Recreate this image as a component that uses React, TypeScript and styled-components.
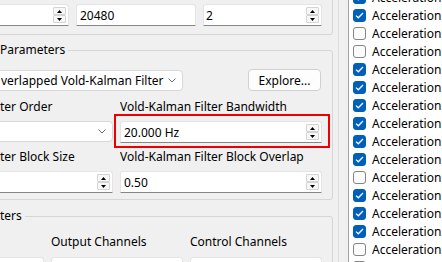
import React from "react";
import styled, { createGlobalStyle } from "styled-components";

const GlobalStyle = createGlobalStyle`
  html, body {
    margin: 0;
    padding: 0;
    background: #f0f0f0;
  }
  body {
    font-family: "Noto Sans", "Segoe UI", sans-serif;
    font-size: 12px;
    color: #000;
  }
`;

const Window = styled.div`
  display: flex;
  width: 442px;
  height: 262px;
  overflow: hidden;
  background: #f0f0f0;
`;

const SettingsPane = styled.div`
  width: 338px;
  flex-shrink: 0;
  overflow: hidden;
  border-right: 1px solid #dedede;
`;

// the pane is scrolled a little to the right, so the left edge is cut
const Scrolled = styled.div`
  width: 363px;
  margin-left: -30px;
`;

const Group = styled.div<{ $top: number; $bottom?: number }>`
  border: 1px solid #d6d6d6;
  border-radius: 3px;
  margin-top: ${(p) => p.$top}px;
  padding: 0 10px ${(p) => p.$bottom ?? 6}px 0;
`;

const TopGroup = styled(Group)`
  padding-top: 13px;
  padding-bottom: 8px;
`;

const GroupTitle = styled.div`
  width: fit-content;
  margin: -9px 0 0 29px;
  padding-right: 3px;
  height: 16px;
  line-height: 16px;
  background: #f0f0f0;
  white-space: nowrap;
`;

const Grid = styled.div<{ $cols: string; $rows?: string; $mt?: number }>`
  display: grid;
  grid-template-columns: ${(p) => p.$cols};
  grid-template-rows: ${(p) => p.$rows ?? "auto"};
  column-gap: 7px;
  row-gap: 6px;
  margin-top: ${(p) => p.$mt ?? 0}px;
`;

const Label = styled.div<{ $indent?: number }>`
  height: 16px;
  line-height: 16px;
  padding-left: ${(p) => p.$indent ?? 0}px;
  white-space: nowrap;
  overflow: hidden;
`;

const Field = styled.div<{ $indent?: number; $h?: number }>`
  box-sizing: border-box;
  display: flex;
  align-items: center;
  height: ${(p) => p.$h ?? 22}px;
  background: #fff;
  border: 1px solid #e4e4e4;
  border-bottom-color: #868686;
  border-radius: 3px 3px 0 0;
  padding: 0 2px 0 ${(p) => p.$indent ?? 3}px;
`;

const Value = styled.span`
  flex: 1;
  white-space: nowrap;
  overflow: hidden;
`;

const SpinStack = styled.div`
  display: flex;
  flex-direction: column;
`;

const SpinButton = styled.div`
  box-sizing: border-box;
  display: flex;
  align-items: center;
  justify-content: center;
  width: 13px;
  height: 8px;
  background: #f7f7f7;
  border: 1px solid #d4d4d4;
  border-radius: 1px;
`;

const Combo = styled.div<{ $indent?: number; $w?: number }>`
  box-sizing: border-box;
  display: flex;
  align-items: center;
  width: ${(p) => (p.$w ? `${p.$w}px` : "auto")};
  height: 21px;
  background: #fff;
  border: 1px solid #d8d8d8;
  border-radius: 4px;
  padding: 0 6px 0 ${(p) => p.$indent ?? 4}px;
`;

const ButtonRow = styled.div`
  display: flex;
  align-items: center;
  justify-content: space-between;
  height: 22px;
  margin-top: 11px;
`;

const PushButton = styled.div`
  box-sizing: border-box;
  display: flex;
  align-items: center;
  justify-content: center;
  width: 73px;
  height: 22px;
  margin-right: 1px;
  background: #fdfdfd;
  border: 1px solid #d0d0d0;
  border-radius: 4px;
`;

const Highlighted = styled.div`
  position: relative;
  &::after {
    content: "";
    position: absolute;
    top: -7px;
    left: -6px;
    right: -8px;
    bottom: -5px;
    border: 2px solid #ec0000;
    pointer-events: none;
  }
`;

const ListBox = styled.div`
  flex: 1;
  margin-left: 9px;
  background: #fff;
  border-left: 1px solid #a3a3a3;
  overflow: hidden;
`;

const ListInner = styled.div`
  margin-top: -12px;
`;

const ListRow = styled.div`
  display: flex;
  align-items: center;
  gap: 6px;
  height: 18px;
  padding-left: 4px;
  white-space: nowrap;
`;

const CheckBox = styled.span<{ $checked: boolean }>`
  box-sizing: border-box;
  display: flex;
  align-items: center;
  justify-content: center;
  width: 13px;
  height: 13px;
  flex-shrink: 0;
  border-radius: 3px;
  background: ${(p) => (p.$checked ? "#005fb8" : "#fbfbfb")};
  border: 1px solid ${(p) => (p.$checked ? "#005fb8" : "#858585")};
`;

const Arrow = ({ up }: { up?: boolean }) => (
  <svg width="5" height="3" viewBox="0 0 5 3">
    <polygon points={up ? "0,3 5,3 2.5,0" : "0,0 5,0 2.5,3"} fill="#000" />
  </svg>
);

const Chevron = () => (
  <svg width="8" height="5" viewBox="0 0 8 5">
    <polyline points="0.5,0.5 4,4 7.5,0.5" fill="none" stroke="#6a6a6a" strokeWidth="1" />
  </svg>
);

const Check = () => (
  <svg width="9" height="7" viewBox="0 0 9 7">
    <polyline points="1,3.6 3.3,5.8 8,1" fill="none" stroke="#fff" strokeWidth="1.3" />
  </svg>
);

function SpinBox({ value, indent }: { value?: string; indent?: number }) {
  return (
    <Field $indent={indent}>
      <Value>{value}</Value>
      <SpinStack>
        <SpinButton>
          <Arrow up />
        </SpinButton>
        <SpinButton>
          <Arrow />
        </SpinButton>
      </SpinStack>
    </Field>
  );
}

function Dropdown({ text, indent, width }: { text?: string; indent?: number; width?: number }) {
  return (
    <Combo $indent={indent} $w={width}>
      <Value>{text}</Value>
      <Chevron />
    </Combo>
  );
}

const channels = [
  true, true, false, false, true, true, true, true,
  true, true, false, true, true, true, false, false,
];

export default function App() {
  return (
    <>
      <GlobalStyle />
      <Window>
        <SettingsPane>
          <Scrolled>
            <TopGroup $top={-10}>
              <Grid $cols="98px 120px 119px">
                <SpinBox />
                <Field>
                  <Value>20480</Value>
                </Field>
                <SpinBox value="2" indent={2} />
              </Grid>
            </TopGroup>

            <Group $top={15}>
              <GroupTitle>Parameters</GroupTitle>
              <ButtonRow>
                <Dropdown text="verlapped Vold-Kalman Filter" indent={29} width={212} />
                <PushButton>Explore...</PushButton>
              </ButtonRow>
              <Grid $cols="142px 202px" $rows="16px 22px 16px 22px" $mt={8}>
                <Label $indent={29}>ter Order</Label>
                <Label>Vold-Kalman Filter Bandwidth</Label>
                <Dropdown />
                <Highlighted>
                  <SpinBox value="20.000 Hz" />
                </Highlighted>
                <Label $indent={29}>ter Block Size</Label>
                <Label>Vold-Kalman Filter Block Overlap</Label>
                <SpinBox />
                <SpinBox value="0.50" />
              </Grid>
            </Group>

            <Group $top={16} $bottom={0}>
              <GroupTitle>ters</GroupTitle>
              <Grid $cols="73px 132px 132px" $mt={10}>
                <Label />
                <Label>Output Channels</Label>
                <Label>Control Channels</Label>
              </Grid>
              <Grid $cols="73px 132px 132px" $mt={7}>
                <Field $h={30} />
                <Field $h={30} />
                <Field $h={30} />
              </Grid>
            </Group>
          </Scrolled>
        </SettingsPane>

        <ListBox>
          <ListInner>
            {channels.map((checked, i) => (
              <ListRow key={i}>
                <CheckBox $checked={checked}>{checked && <Check />}</CheckBox>
                Acceleration
              </ListRow>
            ))}
          </ListInner>
        </ListBox>
      </Window>
    </>
  );
}
